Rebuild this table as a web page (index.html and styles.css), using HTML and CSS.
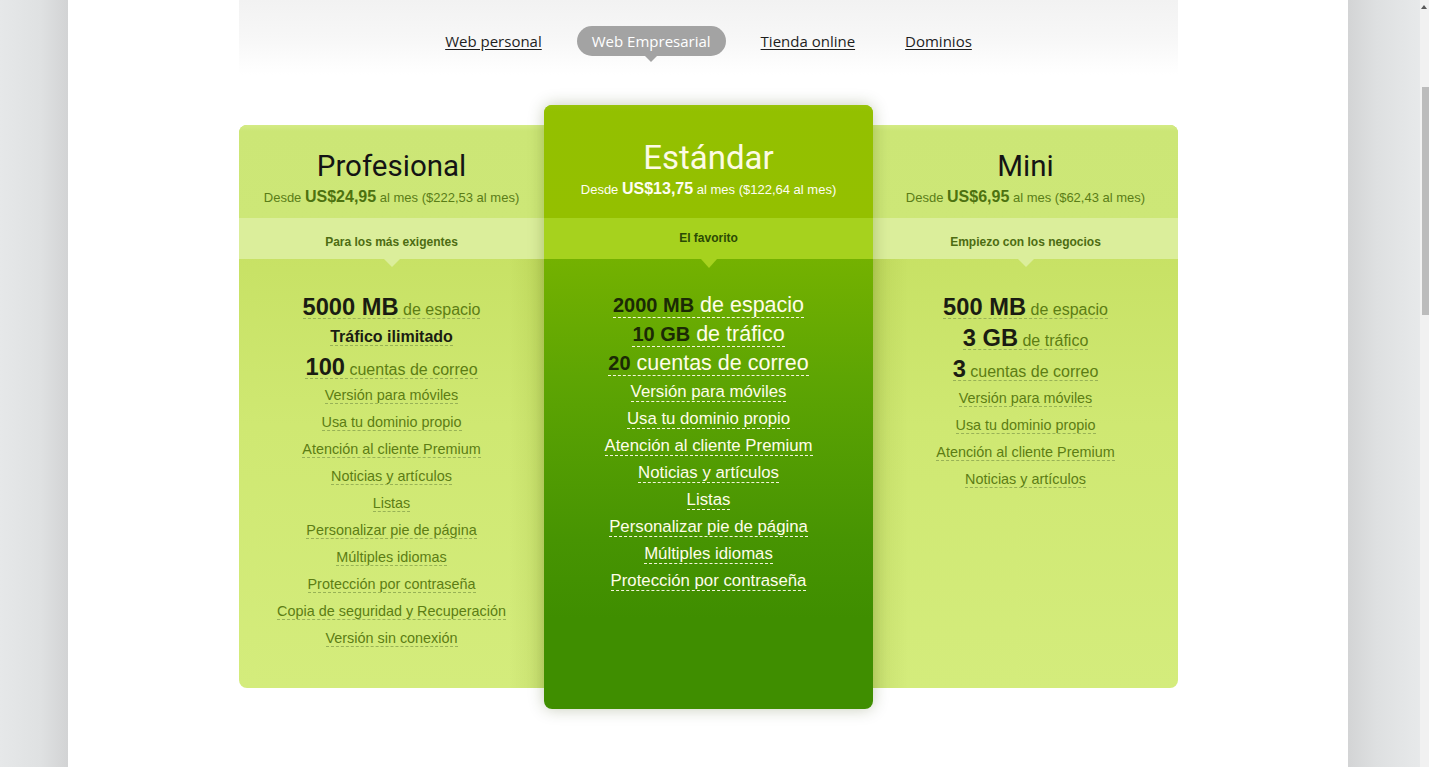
FILE: index.html
```html
<!DOCTYPE html>
<html lang="es">
<head>
<meta charset="utf-8">
<title>Planes</title>
<link rel="stylesheet" href="styles.css">
</head>
<body>
<div class="viewport">
  <div class="gutter gutter-left"></div>
  <main class="page">
    <div class="content">
      <nav class="tabs">
        <a class="tab" href="#">Web personal</a>
        <a class="tab tab-active" href="#">Web Empresarial</a>
        <a class="tab" href="#">Tienda online</a>
        <a class="tab" href="#">Dominios</a>
      </nav>
      <section class="plans">
        <article class="plan plan-side plan-left">
          <header class="plan-head">
            <h2 class="plan-title">Profesional</h2>
            <p class="plan-price">Desde <b>US$24,95</b> al mes ($222,53 al mes)</p>
          </header>
          <div class="plan-band">Para los más exigentes</div>
          <ul class="features">
            <li class="big"><span><b>5000 MB</b> de espacio</span></li>
            <li class="big strong"><span><b>Tráfico ilimitado</b></span></li>
            <li class="big"><span><b>100</b> cuentas de correo</span></li>
            <li><span>Versión para móviles</span></li>
            <li><span>Usa tu dominio propio</span></li>
            <li><span>Atención al cliente Premium</span></li>
            <li><span>Noticias y artículos</span></li>
            <li><span>Listas</span></li>
            <li><span>Personalizar pie de página</span></li>
            <li><span>Múltiples idiomas</span></li>
            <li><span>Protección por contraseña</span></li>
            <li><span>Copia de seguridad y Recuperación</span></li>
            <li><span>Versión sin conexión</span></li>
          </ul>
        </article>
        <article class="plan plan-main">
          <header class="plan-head">
            <h2 class="plan-title">Estándar</h2>
            <p class="plan-price">Desde <b>US$13,75</b> al mes ($122,64 al mes)</p>
          </header>
          <div class="plan-band">El favorito</div>
          <ul class="features">
            <li class="big"><span><b>2000 MB</b> de espacio</span></li>
            <li class="big"><span><b>10 GB</b> de tráfico</span></li>
            <li class="big"><span><b>20</b> cuentas de correo</span></li>
            <li><span>Versión para móviles</span></li>
            <li><span>Usa tu dominio propio</span></li>
            <li><span>Atención al cliente Premium</span></li>
            <li><span>Noticias y artículos</span></li>
            <li><span>Listas</span></li>
            <li><span>Personalizar pie de página</span></li>
            <li><span>Múltiples idiomas</span></li>
            <li><span>Protección por contraseña</span></li>
          </ul>
        </article>
        <article class="plan plan-side plan-right">
          <header class="plan-head">
            <h2 class="plan-title">Mini</h2>
            <p class="plan-price">Desde <b>US$6,95</b> al mes ($62,43 al mes)</p>
          </header>
          <div class="plan-band">Empiezo con los negocios</div>
          <ul class="features">
            <li class="big"><span><b>500 MB</b> de espacio</span></li>
            <li class="big"><span><b>3 GB</b> de tráfico</span></li>
            <li class="big"><span><b>3</b> cuentas de correo</span></li>
            <li><span>Versión para móviles</span></li>
            <li><span>Usa tu dominio propio</span></li>
            <li><span>Atención al cliente Premium</span></li>
            <li><span>Noticias y artículos</span></li>
          </ul>
        </article>
      </section>
    </div>
  </main>
  <div class="gutter gutter-right"></div>
  <div class="scrollbar">
    <div class="scroll-arrow"></div>
    <div class="scroll-thumb"></div>
  </div>
</div>
</body>
</html>
```
FILE: styles.css
```css
html, body {
  margin: 0;
  padding: 0;
  height: 767px;
  overflow: hidden;
  background: #ffffff;
}

.viewport {
  display: flex;
  height: 767px;
  font-family: "Liberation Sans", Arial, sans-serif;
}

.gutter-left {
  width: 68px;
  flex: 0 0 68px;
  background: linear-gradient(90deg, #e6e8e9 0%, #dfe1e2 60%, #d2d3d4 100%);
}

.gutter-right {
  flex: 1 1 auto;
  background: linear-gradient(90deg, #d3d4d5 0%, #dee0e1 40%, #e7e9ea 100%);
}

.page {
  width: 1280px;
  flex: 0 0 1280px;
  background: #ffffff;
  padding: 0 170px 0 171px;
  box-sizing: border-box;
}

.content {
  width: 939px;
}

/* Tabs */
.tabs {
  height: 75px;
  box-sizing: border-box;
  padding-top: 26px;
  display: flex;
  justify-content: center;
  gap: 20px;
  background: linear-gradient(180deg, #f2f2f2 0%, #f7f7f7 50%, #ffffff 100%);
}

.tab {
  position: relative;
  display: block;
  height: 30px;
  line-height: 30px;
  padding: 0 15px;
  font-family: "Open Sans", sans-serif;
  font-size: 15px;
  color: #1e1e1e;
  text-decoration: underline;
  text-underline-offset: 2px;
}

.tab-active {
  background: #a3a3a3;
  color: #ffffff;
  border-radius: 15px;
  text-decoration: none;
}

.tab-active::after {
  content: "";
  position: absolute;
  left: 50%;
  bottom: -6px;
  margin-left: -6px;
  border-top: 6px solid #a3a3a3;
  border-left: 6px solid transparent;
  border-right: 6px solid transparent;
}

/* Plans */
.plans {
  display: flex;
  align-items: flex-start;
  margin-top: 30px;
}

.plan {
  display: flex;
  flex-direction: column;
  overflow: visible;
}

.plan-side {
  width: 305px;
  flex: 0 0 305px;
  height: 563px;
  margin-top: 20px;
}

.plan-left {
  border-radius: 8px 0 0 8px;
  background:
    linear-gradient(90deg, rgba(0,0,0,0) 270px, rgba(90,110,0,0.10) 305px),
    linear-gradient(180deg, #c0dc5a 0px, #c7e164 120px, #cfe872 300px, #d4ec7c 100%);
}

.plan-right {
  border-radius: 0 8px 8px 0;
  background:
    linear-gradient(270deg, rgba(0,0,0,0) 270px, rgba(90,110,0,0.10) 305px),
    linear-gradient(180deg, #c0dc5a 0px, #c7e164 120px, #cfe872 300px, #d4ec7c 100%);
}

.plan-left .plan-head { border-radius: 8px 0 0 0; }
.plan-right .plan-head { border-radius: 0 8px 0 0; }

.plan-main {
  position: relative;
  z-index: 2;
  width: 329px;
  flex: 0 0 329px;
  height: 604px;
  border-radius: 8px;
  background: linear-gradient(180deg, #8dbf00 0%, #7ab500 20%, #5ea503 45%, #479402 72%, #3f8e00 85%, #3f8e00 100%);
  box-shadow: 0 0 16px rgba(50, 70, 0, 0.28);
}

.plan-head {
  text-align: center;
  box-sizing: border-box;
}

.plan-side .plan-head {
  height: 93px;
  padding-top: 24px;
  background: linear-gradient(180deg, #d4eb85 0px, #cce676 6px, #cde777 100%);
}

.plan-main .plan-head {
  height: 113px;
  padding-top: 33px;
  border-radius: 8px 8px 0 0;
  background: linear-gradient(180deg, #98c30a 0px, #93c000 6px, #94c000 100%);
}

.plan-title {
  margin: 0;
  font-family: Roboto, "Liberation Sans", sans-serif;
  font-weight: 400;
}

.plan-side .plan-title {
  font-size: 29.5px;
  line-height: 34px;
  color: #141414;
}

.plan-main .plan-title {
  font-size: 33px;
  line-height: 40px;
  color: #fdfbe4;
}

.plan-price {
  margin: 0;
  font-size: 13px;
  line-height: 20px;
}

.plan-price b {
  font-size: 16px;
}

.plan-side .plan-price {
  margin-top: 4px;
  color: #5a7d17;
}

.plan-side .plan-price b {
  color: #4d7210;
}

.plan-main .plan-price {
  margin-top: 1px;
  color: #fffef2;
}

.plan-band {
  position: relative;
  height: 41px;
  box-sizing: border-box;
  text-align: center;
  font-size: 12px;
  font-weight: bold;
  line-height: 36px;
}

.plan-side .plan-band {
  padding-top: 6px;
  background: #dbee9b;
  color: #4d6c12;
}

.plan-main .plan-band {
  padding-top: 2px;
  background: #a6d21e;
  color: #2b4a04;
}

.plan-band::after {
  content: "";
  position: absolute;
  left: 50%;
  top: 100%;
  margin-left: -8px;
  border-left: 8px solid transparent;
  border-right: 8px solid transparent;
}

.plan-side .plan-band::after {
  border-top: 8px solid #dbee9b;
}

.plan-main .plan-band::after {
  border-top: 9px solid #a6d21e;
}

/* Features */
.features {
  list-style: none;
  margin: 0;
  padding: 33px 0 0;
  text-align: center;
}

.plan-main .features {
  padding-top: 32px;
}

.features li {
  height: 27px;
  line-height: 27px;
  font-size: 14.4px;
  white-space: nowrap;
}

.features li span {
  border-bottom: 1px dashed;
}

.plan-side .features li {
  color: #5c7d14;
}

.plan-side .features li span {
  border-bottom-color: #98b256;
}

.plan-side .features li.big {
  height: 30px;
  line-height: 30px;
  font-size: 16px;
}

.plan-right .features li.big {
  height: 31px;
  line-height: 31px;
}

.plan-side .features li.big b {
  font-size: 23.7px;
  color: #1a1c12;
}

.plan-side .features li.strong b {
  font-size: 16px;
}

.plan-main .features li {
  font-size: 16.8px;
  color: #fffde9;
}

.plan-main .features li span {
  border-bottom-color: #f4f6dc;
}

.plan-main .features li.big {
  height: 29px;
  line-height: 29px;
  font-size: 21.5px;
}

.plan-main .features li.big b {
  font-size: 20px;
  color: #1b2a05;
}

/* Scrollbar */
.scrollbar {
  width: 9px;
  flex: 0 0 9px;
  background: #f1f1f1;
  display: flex;
  flex-direction: column;
  align-items: flex-end;
}

.scroll-arrow {
  margin: 5px 2px 0 0;
  width: 0;
  height: 0;
  border-bottom: 4px solid #5a5a5a;
  border-left: 3px solid transparent;
  border-right: 3px solid transparent;
}

.scroll-thumb {
  margin-top: 78px;
  width: 7px;
  height: 228px;
  background: #bcbcbc;
}
```
